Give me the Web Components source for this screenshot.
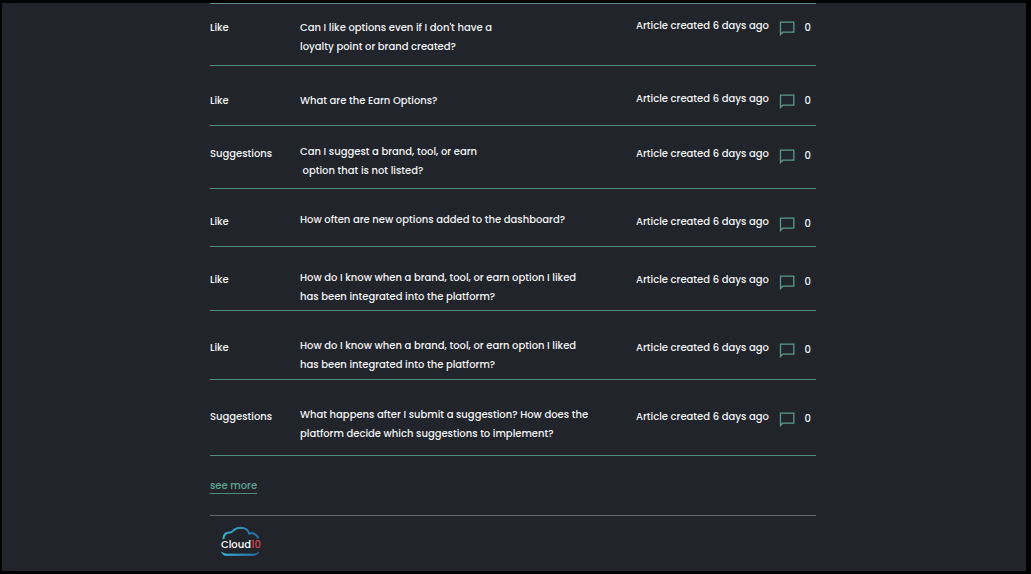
<!DOCTYPE html>
<html lang="en">
<head>
<meta charset="utf-8">
<meta name="viewport" content="width=device-width, initial-scale=1">
<title>Cloud10 help articles</title>
<style>
  html { background: #000; }
  body { margin: 0; background: #000; color: #f2f3f4; font: 500 10px/19px Poppins, Inter, "Open Sans", sans-serif; }
</style>
</head>
<body>
<help-page>
  <article-list>
    <article-row class="snug raised" category="Like">Can I like options even if I don't have a<br>loyalty point or brand created?</article-row>
    <article-row class="roomy short raised" category="Like">What are the Earn Options?</article-row>
    <article-row class="compact" category="Suggestions">Can I suggest a brand, tool, or earn<br>&nbsp;option that is not listed?</article-row>
    <article-row class="single" category="Like">How often are new options added to the dashboard?</article-row>
    <article-row category="Like">How do I know when a brand, tool, or earn option I liked<br>has been integrated into the platform?</article-row>
    <article-row class="roomy" category="Like">How do I know when a brand, tool, or earn option I liked<br>has been integrated into the platform?</article-row>
    <article-row class="roomy tall" category="Suggestions">What happens after I submit a suggestion? How does the<br>platform decide which suggestions to implement?</article-row>
  </article-list>
  <more-link slot="more">see more</more-link>
  <site-footer slot="footer"></site-footer>
</help-page>

<script>
function define(name, html, setup) {
  const template = document.createElement('template');
  template.innerHTML = html;
  customElements.define(name, class extends HTMLElement {
    constructor() {
      super();
      this.attachShadow({ mode: 'open' }).append(template.content.cloneNode(true));
    }
    connectedCallback() { if (setup) setup(this, this.shadowRoot); }
  });
}

define('help-page', `
  <style>
    :host { display: block; box-sizing: border-box; min-height: 100vh; padding: 0 2px 0 0;
      border: solid #000; border-width: 3px 5px 3px 2px; background: #21242b; }
    main { max-width: 606px; margin: 0 auto; }
  </style>
  <main><slot></slot><slot name="more"></slot><slot name="footer"></slot></main>
`);

define('article-list', `
  <style>
    :host { display: block; border-top: 1px solid #5c8a82; }
  </style>
  <div role="list"><slot></slot></div>
`);

define('comment-count', `
  <style>
    :host { display: flex; align-items: center; gap: 10px; padding-top: 2px; }
    svg { display: block; width: 16px; height: 16px; }
  </style>
  <svg viewBox="0 0 16 16" aria-label="Comments" role="img">
    <path d="M1.500 14.500V2.200H14.800V12.200H3.800z" fill="none" stroke="#5a9a8e" stroke-width="1.300" stroke-linejoin="miter"/>
  </svg>
  <span><slot>0</slot></span>
`);

define('article-row', `
  <style>
    :host { display: grid; grid-template-columns: 90px minmax(0, 1fr) 180px; align-items: start;
      box-sizing: border-box; min-height: 64px; padding-top: 21px; border-bottom: 1px solid #4f8b80; }
    :host(.snug) { min-height: 62px; padding-top: 14px; }
    :host(.compact) { min-height: 63px; padding-top: 16px; }
    :host(.single) { min-height: 58px; padding-top: 21px; }
    :host(.roomy) { min-height: 69px; padding-top: 25px; }
    :host(.short) { min-height: 60px; }
    :host(.tall) { min-height: 76px; }
    .category, .meta { padding-top: 2px; }
    :host(.raised) .category { padding-top: 0; }
    :host(.raised) .meta { padding-top: 0; margin-top: -2px; }
    .meta { display: flex; justify-content: space-between; align-items: flex-start; padding-right: 5px; }
  </style>
  <span class="category"></span>
  <span><slot></slot></span>
  <span class="meta"><span>Article created 6 days ago</span><comment-count>0</comment-count></span>
`, (host, root) => {
  host.setAttribute('role', 'listitem');
  root.querySelector('.category').textContent = host.getAttribute('category');
});

define('more-link', `
  <style>
    :host { display: flex; padding-top: 22px; }
    a { color: #5ea597; text-decoration: none; line-height: 15px; border-bottom: 1px solid #4f8b80; }
  </style>
  <a href="#more"><slot></slot></a>
`);

define('brand-logo', `
  <style>
    :host { display: block; }
    svg { display: block; width: 44px; height: 32px; overflow: visible; }
    text { font: 500 10px Poppins, Inter, sans-serif; }
  </style>
  <svg viewBox="0 0 44 32" role="img" aria-label="Cloud10">
    <defs><linearGradient id="sky" x1="0" x2="1"><stop stop-color="#35b5d0"/><stop offset="1" stop-color="#256ca5"/></linearGradient></defs>
    <path d="M3.500 13C3.200 8.500 6.500 6 10.500 6.500C13.500 6 13 2 20.500 1.800C26 1.800 28.500 5 29.200 7.600C34 6.500 37.500 9 38.200 12.500" fill="none" stroke="url(#sky)" stroke-width="2"/>
    <path d="M1.500 26C3.500 30 5.500 29.500 8 29.500H32C35.500 29.500 37.500 28.500 39 26C37.500 27.500 35.500 28 33 28H8C5 28 3.500 27.500 1.500 26Z" fill="url(#sky)" stroke="url(#sky)" stroke-width=".7"/>
    <text x="1" y="22" fill="#fff">Cloud<tspan fill="#d9454f">10</tspan></text>
  </svg>
`);

define('site-footer', `
  <style>
    :host { display: block; margin-top: 21px; padding: 10px 10px 12px; border-top: 1px solid #66696e; }
  </style>
  <footer><brand-logo></brand-logo></footer>
`);
</script>
</body>
</html>
